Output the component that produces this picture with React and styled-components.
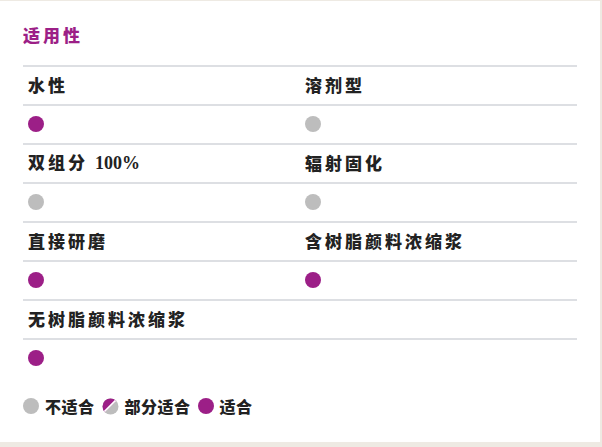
import React from "react";
import styled, { createGlobalStyle } from "styled-components";

const Global = createGlobalStyle`
  html, body { margin: 0; padding: 0; background: #eeeae3; }
  body { font-family: "Noto Sans CJK SC", "Noto Sans", sans-serif; }
`;

const PURPLE = "#9c1f87";
const GRAY = "#bdbdbd";
const LINE = "#dddfe3";

const Panel = styled.div`
  width: 600px;
  height: 441px;
  margin-top: 1px;
  background: #ffffff;
  box-sizing: border-box;
  padding: 23px 23px 0 23px;
`;

const Title = styled.h2`
  margin: 0;
  font-size: 17px;
  line-height: 22px;
  font-weight: 900;
  letter-spacing: 3px;
  color: ${PURPLE};
  font-family: "Noto Sans CJK SC", sans-serif;
`;

const Table = styled.div`
  margin-top: 19px;
  display: grid;
  grid-template-columns: 277px 277px;
`;

const Cell = styled.div`
  height: 37px;
  box-sizing: border-box;
  border-top: 2px solid ${LINE};
  display: flex;
  align-items: center;
  padding: 0 0 2px 5px;
  height: 39px;
`;

const Heading = styled.span`
  font-family: "Noto Sans CJK SC", sans-serif;
  font-weight: 900;
  font-size: 17px;
  letter-spacing: 3px;
  color: #222222;
  line-height: 20px;
  white-space: pre;
`;

const Num = styled.span`
  font-family: "Liberation Serif", serif;
  font-weight: 700;
  font-size: 18px;
  letter-spacing: 0;
`;

const Dot = styled.span`
  display: inline-block;
  width: 16px;
  height: 16px;
  border-radius: 50%;
  background: ${(p) => (p.$ok ? PURPLE : GRAY)};
  flex: none;
`;

const Legend = styled.div`
  margin-top: 19px;
  display: flex;
  align-items: center;
  font-size: 16px;
  letter-spacing: 0.5px;
  line-height: 20px;
  font-weight: 900;
  color: #222222;
`;

const LegendItem = styled.div`
  display: flex;
  align-items: center;
  gap: 6px;
  margin-right: 7px;
`;

const HalfIcon = () => (
  <svg width="17" height="17" viewBox="0 0 16 16" style={{ flex: "none" }}>
    <defs>
      <clipPath id="c">
        <circle cx="8" cy="8" r="7.5" />
      </clipPath>
    </defs>
    <g clipPath="url(#c)">
      <rect x="0" y="0" width="16" height="16" fill={GRAY} />
      <polygon points="0,0 16,0 0,16" fill={PURPLE} />
      <line x1="16" y1="-1" x2="-1" y2="16" stroke="#fff" strokeWidth="1.6" />
    </g>
  </svg>
);

const rows = [
  [
    { title: "水性", ok: true },
    { title: "溶剂型", ok: false },
  ],
  [
    { title: "双组分 ", num: "100%", ok: false },
    { title: "辐射固化", ok: false },
  ],
  [
    { title: "直接研磨", ok: true },
    { title: "含树脂颜料浓缩浆", ok: true },
  ],
  [{ title: "无树脂颜料浓缩浆", ok: true }, null],
];

export default function App() {
  return (
    <>
      <Global />
      <Panel>
        <Title>适用性</Title>
        <Table>
          {rows.map((pair, i) => (
            <React.Fragment key={i}>
              {pair.map((c, j) => (
                <Cell key={"h" + j}>
                  {c && (
                    <Heading>
                      {c.title}
                      {c.num && <Num>{c.num}</Num>}
                    </Heading>
                  )}
                </Cell>
              ))}
              {pair.map((c, j) => (
                <Cell key={"d" + j}>{c && <Dot $ok={c.ok} />}</Cell>
              ))}
            </React.Fragment>
          ))}
        </Table>
        <Legend>
          <LegendItem>
            <Dot />
            <span>不适合</span>
          </LegendItem>
          <LegendItem>
            <HalfIcon />
            <span>部分适合</span>
          </LegendItem>
          <LegendItem>
            <Dot $ok />
            <span>适合</span>
          </LegendItem>
        </Legend>
      </Panel>
    </>
  );
}
